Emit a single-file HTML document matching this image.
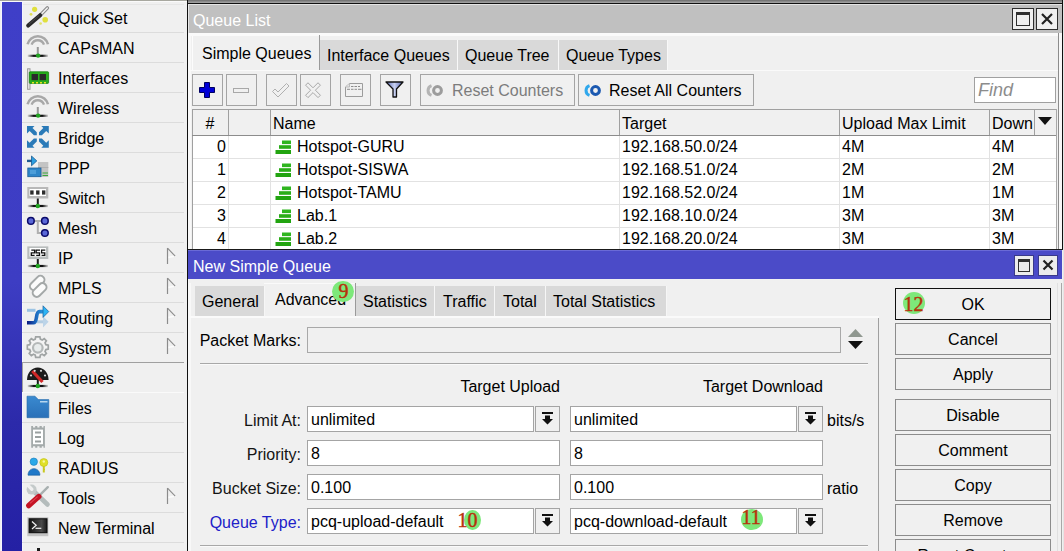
<!DOCTYPE html>
<html><head><meta charset="utf-8"><style>
html,body{margin:0;padding:0;width:1064px;height:551px;overflow:hidden;background:#f0f0f0}
body>div,body>svg{position:absolute}
.t{font-family:'Liberation Sans',sans-serif;font-size:16px;line-height:18px;height:18px;white-space:nowrap}
</style></head><body>
<div style="left:0px;top:0px;width:1064px;height:551px;background:#f0f0f0"></div>
<div style="left:0px;top:0px;width:187px;height:1px;background:#a8a8a0"></div>
<div style="left:0px;top:1px;width:187px;height:1px;background:#fafafa"></div>
<div style="left:22px;top:4px;width:162px;height:1px;background:#e6e6e6"></div>
<svg style="left:0;top:0" width="0" height="0"><defs><linearGradient id="gnd" gradientUnits="userSpaceOnUse" x1="5" y1="0" x2="27" y2="0"><stop offset="0" stop-color="#111" stop-opacity="0"/><stop offset="0.3" stop-color="#111"/><stop offset="0.7" stop-color="#111"/><stop offset="1" stop-color="#111" stop-opacity="0"/></linearGradient></defs></svg>
<div style="left:2px;top:2px;width:20px;height:549px;background:linear-gradient(#3f3fc8 0px,#3d3dc3 280px,#2c2aaa 420px,#2420a4 549px)"></div>
<div style="left:1px;top:2px;width:1px;height:549px;background:#f4f4ff"></div>
<div style="left:22px;top:2px;width:1px;height:549px;background:#f4f4ff"></div>
<div style="left:22px;top:32px;width:162px;height:1px;background:#dcdcdc"></div>
<div class="t" style="left:58px;top:10px;color:#000">Quick Set</div>
<svg style="left:22px;top:2px" width="38" height="30">
<circle cx="12.6" cy="7.3" r="2.6" fill="#dede2a" opacity="0.9"/>
<circle cx="9" cy="12.3" r="1.4" fill="#dada30" opacity="0.8"/>
<circle cx="23.2" cy="17.8" r="2.8" fill="#dede2a" opacity="0.9"/>
<circle cx="18.6" cy="21.5" r="1.3" fill="#dada30" opacity="0.7"/>
<path d="M18.2 13.2 L25.3 6" stroke="#8a8a8a" stroke-width="3.6" stroke-linecap="round"/>
<path d="M18.2 13.2 L25.3 6" stroke="#f4f4f4" stroke-width="1.4" stroke-linecap="round"/>
<path d="M6.2 23.6 L18.2 13.2" stroke="#2a2a2a" stroke-width="4" stroke-linecap="round"/>
<path d="M7 22.2 L17 13.6" stroke="#4a4a4a" stroke-width="1" />
</svg>
<div style="left:22px;top:62px;width:162px;height:1px;background:#dcdcdc"></div>
<div class="t" style="left:58px;top:40px;color:#000">CAPsMAN</div>
<svg style="left:22px;top:32px" width="38" height="30">
<path d="M5.6 12.2 A10.5 10.5 0 0 1 26 12.2" fill="none" stroke="#a8a8a8" stroke-width="2.6"/>
<path d="M9.6 12.6 A6.6 6.6 0 0 1 22 12.6" fill="none" stroke="#a8a8a8" stroke-width="2.4"/>
<path d="M15.8 15 V23" stroke="#989898" stroke-width="2"/>
<path d="M5.5 23.8 H26" stroke="url(#gnd)" stroke-width="2.2"/><circle cx="16.1" cy="23.6" r="2.2" fill="#22a422"/></svg>
<div style="left:22px;top:92px;width:162px;height:1px;background:#dcdcdc"></div>
<div class="t" style="left:58px;top:70px;color:#000">Interfaces</div>
<svg style="left:22px;top:62px" width="38" height="30">
<rect x="5.6" y="6.8" width="2.4" height="20.5" fill="#e8e8e8" stroke="#9a9a9a" stroke-width="1"/>
<rect x="7.3" y="9.8" width="19.3" height="11.6" rx="0.8" fill="#26ac1c" stroke="#168010" stroke-width="0.8"/>
<rect x="9.6" y="12" width="6.4" height="6.2" fill="#2a2a2a"/>
<rect x="17.6" y="12" width="6.4" height="6.2" fill="#2a2a2a"/>
<path d="M10 20.8 h2 M14 20.8 h2 M18 20.8 h2 M22 20.8 h2" stroke="#e6e020" stroke-width="1.4"/>
</svg>
<div style="left:22px;top:122px;width:162px;height:1px;background:#dcdcdc"></div>
<div class="t" style="left:58px;top:100px;color:#000">Wireless</div>
<svg style="left:22px;top:92px" width="38" height="30">
<path d="M5.6 12.2 A10.5 10.5 0 0 1 26 12.2" fill="none" stroke="#a8a8a8" stroke-width="2.6"/>
<path d="M9.6 12.6 A6.6 6.6 0 0 1 22 12.6" fill="none" stroke="#a8a8a8" stroke-width="2.4"/>
<path d="M15.8 15 V23" stroke="#989898" stroke-width="2"/>
<path d="M5.5 23.8 H26" stroke="url(#gnd)" stroke-width="2.2"/><circle cx="16.1" cy="23.6" r="2.2" fill="#22a422"/></svg>
<div style="left:22px;top:152px;width:162px;height:1px;background:#dcdcdc"></div>
<div class="t" style="left:58px;top:130px;color:#000">Bridge</div>
<svg style="left:22px;top:122px" width="38" height="30">
<g fill="#2a7ab8">
<path d="M5 4 H12.5 L10.5 6 L14.8 10.3 V13.2 H11.9 L7.6 8.9 L5 11.5 Z"/>
<path d="M26.8 4 H19.3 L21.3 6 L17 10.3 V13.2 H19.9 L24.2 8.9 L26.8 11.5 Z"/>
<path d="M5 25.7 H12.5 L10.5 23.7 L14.8 19.4 V16.5 H11.9 L7.6 20.8 L5 18.2 Z"/>
<path d="M26.8 25.7 H19.3 L21.3 23.7 L17 19.4 V16.5 H19.9 L24.2 20.8 L26.8 18.2 Z"/>
</g>
</svg>
<div style="left:22px;top:182px;width:162px;height:1px;background:#dcdcdc"></div>
<div class="t" style="left:58px;top:160px;color:#000">PPP</div>
<svg style="left:22px;top:152px" width="38" height="30">
<rect x="16" y="10" width="10.3" height="15" fill="#c4c4c4"/>
<rect x="16" y="15" width="10.3" height="1" fill="#b0b0b0"/>
<path d="M20.5 21 H26 M20.5 23.5 H26" stroke="#3aa83a" stroke-width="1.2"/>
<rect x="5.8" y="16" width="13.2" height="8.7" fill="#2f86c8" stroke="#1a5e9a" stroke-width="0.8"/>
<rect x="8" y="18" width="6" height="4" fill="#5aa8e0" opacity="0.7"/>
<path d="M5 8.9 H10" stroke="#1e5a90" stroke-width="2.4"/>
<path d="M9.5 4 L14.8 8.9 L9.5 13.8 Z" fill="#2c9ee0" stroke="#1a5a90" stroke-width="0.8"/>
</svg>
<div style="left:22px;top:212px;width:162px;height:1px;background:#dcdcdc"></div>
<div class="t" style="left:58px;top:190px;color:#000">Switch</div>
<svg style="left:22px;top:182px" width="38" height="30">
<rect x="5.3" y="5" width="21" height="11.5" fill="#b8b8b8"/>
<rect x="7.5" y="7" width="16.5" height="7" fill="#ffffff"/>
<rect x="8.2" y="8.4" width="3.4" height="4.2" fill="#2c2c2c"/>
<rect x="14.1" y="8.4" width="3.4" height="4.2" fill="#2c2c2c"/>
<rect x="20" y="8.4" width="3.4" height="4.2" fill="#2c2c2c"/>
<path d="M15.8 16.5 V23" stroke="#1a1a1a" stroke-width="2"/>
<path d="M5.5 24 H26" stroke="url(#gnd)" stroke-width="2.2"/><circle cx="15.8" cy="24" r="2.2" fill="#22a422"/></svg>
<div style="left:22px;top:242px;width:162px;height:1px;background:#dcdcdc"></div>
<div class="t" style="left:58px;top:220px;color:#000">Mesh</div>
<svg style="left:22px;top:212px" width="38" height="30">
<path d="M12.5 8.9 H19 M15.8 8.9 V21 H19" fill="none" stroke="#b0b0b0" stroke-width="2"/>
<circle cx="8.9" cy="8.9" r="3.3" fill="#5a68d8" stroke="#0a0a6a" stroke-width="1.5"/>
<circle cx="22.9" cy="8.9" r="3.3" fill="#5a68d8" stroke="#0a0a6a" stroke-width="1.5"/>
<circle cx="22.9" cy="21" r="3.3" fill="#5a68d8" stroke="#0a0a6a" stroke-width="1.5"/>
</svg>
<div style="left:22px;top:272px;width:162px;height:1px;background:#dcdcdc"></div>
<div class="t" style="left:58px;top:250px;color:#000">IP</div>
<svg style="left:22px;top:242px" width="38" height="30">
<rect x="5.3" y="4.4" width="21" height="12.6" fill="#b8bcbc"/>
<rect x="7.5" y="6" width="16.5" height="8.5" fill="#ffffff"/>
<path d="M9.3 8.2 H12.6 V10.8 H9.3 V13.4 H12.6  M18 8.2 H14.2 V10.8 H17.5 V13.4 H14.2 M23.3 8.2 H19.6 V10.8 H22.8 V13.4 H19.6" fill="none" stroke="#111" stroke-width="1.3"/>
<path d="M15.8 17 V23" stroke="#1a1a1a" stroke-width="2"/>
<path d="M5.5 24 H26" stroke="url(#gnd)" stroke-width="2.2"/><circle cx="15.8" cy="24" r="2.2" fill="#22a422"/></svg>
<svg style="left:165px;top:247px" width="14" height="18"><path d="M3 10.5 L10.5 9" stroke="#fcfcfc" stroke-width="1.5" fill="none"/><path d="M2.5 1 V17" stroke="#8c8c8c" stroke-width="1.2" fill="none"/><path d="M2.5 1.2 L10.2 9.2" stroke="#8c8c8c" stroke-width="1.1" fill="none"/></svg>
<div style="left:22px;top:302px;width:162px;height:1px;background:#dcdcdc"></div>
<div class="t" style="left:58px;top:280px;color:#000">MPLS</div>
<svg style="left:22px;top:272px" width="38" height="30">
<g fill="#fbfbfb" stroke="#a4a8a8" stroke-width="2">
<rect x="-4" y="-8.5" width="8" height="17" rx="3.8" transform="translate(15.2,11) rotate(45)"/>
<rect x="-4" y="-8" width="8" height="16" rx="3.8" transform="translate(17.6,18) rotate(45)"/>
</g>
</svg>
<svg style="left:165px;top:277px" width="14" height="18"><path d="M3 10.5 L10.5 9" stroke="#fcfcfc" stroke-width="1.5" fill="none"/><path d="M2.5 1 V17" stroke="#8c8c8c" stroke-width="1.2" fill="none"/><path d="M2.5 1.2 L10.2 9.2" stroke="#8c8c8c" stroke-width="1.1" fill="none"/></svg>
<div style="left:22px;top:332px;width:162px;height:1px;background:#dcdcdc"></div>
<div class="t" style="left:58px;top:310px;color:#000">Routing</div>
<svg style="left:22px;top:302px" width="38" height="30">
<path d="M5 8.3 H13.5" stroke="#9cc4e4" stroke-width="3"/>
<path d="M15 19.8 H21.2" stroke="#b4cde2" stroke-width="3"/>
<path d="M21 14.2 L26.6 19.8 L21 25.4 Z" fill="#bcd4e8"/>
<defs><linearGradient id="rg" gradientUnits="userSpaceOnUse" x1="5" y1="0" x2="26" y2="0"><stop offset="0" stop-color="#0a1880"/><stop offset="0.45" stop-color="#1e6cc0"/><stop offset="1" stop-color="#30b8f4"/></linearGradient></defs>
<path d="M5 20.8 H11.5 C15.8 20.8 13.2 9.6 17.4 9.6 H22" fill="none" stroke="url(#rg)" stroke-width="3.6"/>
<path d="M21 3.8 L26.8 9.6 L21 15.4 Z" fill="#2cb4f4" stroke="#1a5c9c" stroke-width="0.7"/>
</svg>
<svg style="left:165px;top:307px" width="14" height="18"><path d="M3 10.5 L10.5 9" stroke="#fcfcfc" stroke-width="1.5" fill="none"/><path d="M2.5 1 V17" stroke="#8c8c8c" stroke-width="1.2" fill="none"/><path d="M2.5 1.2 L10.2 9.2" stroke="#8c8c8c" stroke-width="1.1" fill="none"/></svg>
<div style="left:22px;top:362px;width:162px;height:1px;background:#dcdcdc"></div>
<div class="t" style="left:58px;top:340px;color:#000">System</div>
<svg style="left:22px;top:332px" width="38" height="30">
<g transform="translate(15.8,15)">
<path d="M-2.5 -10.5 H2.5 L3 -7.8 L5.2 -6.7 L7.6 -8.3 L10.1 -5.8 L8.5 -3.4 L9.5 -1.2 L12.3 -0.6 V3.9 L9.5 4.5 L8.5 6.7 L10.1 9.1 L7.6 11.6 L5.2 10 L3 11 L2.5 13.8 H-2.5 L-3 11 L-5.2 10 L-7.6 11.6 L-10.1 9.1 L-8.5 6.7 L-9.5 4.5 L-12.3 3.9 V-0.6 L-9.5 -1.2 L-8.5 -3.4 L-10.1 -5.8 L-7.6 -8.3 L-5.2 -6.7 L-3 -7.8 Z" transform="scale(0.85) translate(0,-1.5)" fill="#f4f4f4" stroke="#a0a4a4" stroke-width="2"/>
<circle cx="0" cy="0.8" r="4.8" fill="#e8ecec" stroke="#b4b8b8" stroke-width="2.2"/>
</g>
</svg>
<svg style="left:165px;top:337px" width="14" height="18"><path d="M3 10.5 L10.5 9" stroke="#fcfcfc" stroke-width="1.5" fill="none"/><path d="M2.5 1 V17" stroke="#8c8c8c" stroke-width="1.2" fill="none"/><path d="M2.5 1.2 L10.2 9.2" stroke="#8c8c8c" stroke-width="1.1" fill="none"/></svg>
<div style="left:22px;top:392px;width:162px;height:1px;background:#dcdcdc"></div>
<div class="t" style="left:58px;top:370px;color:#000">Queues</div>
<svg style="left:22px;top:362px" width="38" height="30">
<path d="M5 18 A10.8 12.6 0 0 1 26.6 18 Z" fill="#1c1c1c"/>
<path d="M10.3 9 L20.5 20" stroke="#d02828" stroke-width="3.2"/>
<circle cx="12.7" cy="8.8" r="1.1" fill="#d8d8d8"/><circle cx="19" cy="8.8" r="1.1" fill="#d8d8d8"/>
<circle cx="9" cy="13.5" r="1.1" fill="#d8d8d8"/><circle cx="23" cy="13.5" r="1.1" fill="#d8d8d8"/>
<path d="M15.8 18 V23" stroke="#1a1a1a" stroke-width="2"/>
<path d="M5.5 24 H26" stroke="url(#gnd)" stroke-width="2.2"/><circle cx="15.8" cy="24" r="2.2" fill="#22a422"/></svg>
<div style="left:22px;top:422px;width:162px;height:1px;background:#dcdcdc"></div>
<div class="t" style="left:58px;top:400px;color:#000">Files</div>
<svg style="left:22px;top:392px" width="38" height="30">
<defs><linearGradient id="fl" x1="0" y1="0" x2="0" y2="1"><stop offset="0" stop-color="#3a8ad0"/><stop offset="1" stop-color="#2a70b8"/></linearGradient></defs>
<path d="M5 4.2 H13 L16.3 7.6 H26.8 V25.7 H5 Z" fill="url(#fl)" stroke="#2468a8" stroke-width="0.6"/>
<path d="M18 9.8 H25.5" stroke="#d8ecf8" stroke-width="1.2"/>
</svg>
<div style="left:22px;top:452px;width:162px;height:1px;background:#dcdcdc"></div>
<div class="t" style="left:58px;top:430px;color:#000">Log</div>
<svg style="left:22px;top:422px" width="38" height="30">
<path d="M9.2 4 H11 V5.5 H13.2 V4 H15.3 V5.5 H17.5 V4 H19.8 V5.5 H21.5 V4 H22.9 V25.7 H21.5 V24.2 H19.8 V25.7 H17.5 V24.2 H15.3 V25.7 H13.2 V24.2 H11 V25.7 H9.2 Z" fill="#a4aaaa"/>
<rect x="11" y="7.6" width="10" height="14.6" fill="#ffffff"/>
<path d="M13 10.5 H19 M13 15 H19 M13 19.5 H19" stroke="#9aa0a0" stroke-width="2"/>
</svg>
<div style="left:22px;top:482px;width:162px;height:1px;background:#dcdcdc"></div>
<div class="t" style="left:58px;top:460px;color:#000">RADIUS</div>
<svg style="left:22px;top:452px" width="38" height="30">
<path d="M6 23.2 C6 14.5 17.9 14.5 17.9 23.2 Z" fill="#1f78c8" stroke="#145a9a" stroke-width="0.6"/>
<circle cx="11.8" cy="9.7" r="3.7" fill="#2aa8e8" stroke="#1a78b8" stroke-width="0.6"/>
<path d="M21.8 13 V20.5" stroke="#c8c820" stroke-width="2"/>
<path d="M21.8 17.5 H23" stroke="#c8c820" stroke-width="1"/>
<circle cx="21.8" cy="10.5" r="4" fill="#e0e028" stroke="#c0c010" stroke-width="0.6"/>
<circle cx="21.8" cy="9.5" r="1.2" fill="#f8f8a0"/>
</svg>
<div style="left:22px;top:512px;width:162px;height:1px;background:#dcdcdc"></div>
<div class="t" style="left:58px;top:490px;color:#000">Tools</div>
<svg style="left:22px;top:482px" width="38" height="30">
<path d="M12 9.5 L25.5 22.5" stroke="#b4bcbc" stroke-width="4.6" stroke-linecap="round"/>
<circle cx="9.6" cy="7.6" r="5" fill="#c4caca"/>
<path d="M9.8 7.2 L6 3.4" stroke="#f0f0f0" stroke-width="3.4" stroke-linecap="round"/>
<path d="M16.3 14.7 L25.8 5.2" stroke="#a8b0b0" stroke-width="2.4" stroke-linecap="round"/>
<path d="M6.8 23.6 L16.8 14.6" stroke="#c41424" stroke-width="5.4" stroke-linecap="round"/>
<path d="M8 21.4 L15.6 14.6" stroke="#e04050" stroke-width="1.2"/>
</svg>
<svg style="left:165px;top:487px" width="14" height="18"><path d="M3 10.5 L10.5 9" stroke="#fcfcfc" stroke-width="1.5" fill="none"/><path d="M2.5 1 V17" stroke="#8c8c8c" stroke-width="1.2" fill="none"/><path d="M2.5 1.2 L10.2 9.2" stroke="#8c8c8c" stroke-width="1.1" fill="none"/></svg>
<div style="left:22px;top:542px;width:162px;height:1px;background:#dcdcdc"></div>
<div class="t" style="left:58px;top:520px;color:#000">New Terminal</div>
<svg style="left:22px;top:512px" width="38" height="30">
<rect x="5.3" y="5.2" width="21" height="19" fill="#c4c4c4"/>
<defs><linearGradient id="tg" x1="0" x2="1"><stop offset="0" stop-color="#141414"/><stop offset="0.7" stop-color="#4a4a4a"/><stop offset="1" stop-color="#1a1a1a"/></linearGradient></defs>
<rect x="7.1" y="6.8" width="17.9" height="13.9" fill="url(#tg)" stroke="#0a0a0a" stroke-width="1"/>
<path d="M10 9.5 L14.2 13.3 L10 17" fill="none" stroke="#f4f4f4" stroke-width="1.2"/>
<path d="M13.5 16.3 H19.3" stroke="#f4f4f4" stroke-width="1.2"/>
</svg>
<div style="left:37px;top:548px;width:3px;height:3px;background:#1a1a1a"></div>
<div style="left:22px;top:362px;width:162px;height:1px;background:#a0a0a0"></div>
<div style="left:22px;top:362px;width:1px;height:30px;background:#a0a0a0"></div>
<div style="left:22px;top:392px;width:162px;height:1px;background:#fafafa"></div>
<div style="left:187px;top:0px;width:874px;height:249px;background:#f0f0f0"></div>
<div style="left:187px;top:0px;width:876px;height:3px;background:linear-gradient(#6c6c6c,#a8a8a8)"></div>
<div style="left:187px;top:3px;width:876px;height:1px;background:#111"></div>
<div style="left:187px;top:0px;width:1px;height:249px;background:#111"></div>
<div style="left:188px;top:4px;width:3px;height:245px;background:#f8f8f8"></div>
<div style="left:1058px;top:32px;width:1px;height:217px;background:#8c8c8c"></div>
<div style="left:1059px;top:32px;width:3px;height:217px;background:#f8f8f8"></div>
<div style="left:1062px;top:0px;width:1px;height:249px;background:#111"></div>
<div style="left:1063px;top:0px;width:1px;height:551px;background:#e4e4e4"></div>
<div style="left:188px;top:4px;width:874px;height:29px;background:#c0c0c0;border-top:1px solid #e4e4e4;border-left:1px solid #e8e8e8;box-sizing:border-box"></div>
<div class="t" style="left:193px;top:12px;color:#fff">Queue List</div>
<div style="left:1012px;top:8px;width:22px;height:22px;background:#f0f0f0;border:1px solid #2e2e2e;box-sizing:border-box"></div>
<div style="left:1036px;top:8px;width:22px;height:22px;background:#f0f0f0;border:1px solid #2e2e2e;box-sizing:border-box"></div>
<div style="left:1016px;top:12px;width:14px;height:14px;border:1px solid #303030;border-top:3px solid #303030;box-sizing:border-box"></div>
<svg style="left:1040px;top:12px" width="14" height="14"><path d="M2 2 L12 12 M12 2 L2 12" stroke="#222" stroke-width="2.2"/></svg>
<div style="left:189px;top:33px;width:869px;height:3px;background:#fafafa"></div>
<div style="left:192px;top:36px;width:128px;height:34px;background:#f0f0f0;border-left:1px solid #fcfcfc"></div>
<div style="left:319px;top:35px;width:1px;height:35px;background:#9a9a9a"></div>
<div style="left:320px;top:40px;width:137px;height:30px;background:#d9d9d9"></div>
<div style="left:457px;top:40px;width:1px;height:30px;background:#f8f8f8"></div>
<div class="t" style="left:327px;top:47px;color:#000">Interface Queues</div>
<div style="left:458px;top:40px;width:100px;height:30px;background:#d9d9d9"></div>
<div style="left:558px;top:40px;width:1px;height:30px;background:#f8f8f8"></div>
<div class="t" style="left:465px;top:47px;color:#000">Queue Tree</div>
<div style="left:559px;top:40px;width:108px;height:30px;background:#d9d9d9"></div>
<div style="left:667px;top:40px;width:1px;height:30px;background:#f8f8f8"></div>
<div class="t" style="left:566px;top:47px;color:#000">Queue Types</div>
<div class="t" style="left:202px;top:45px;color:#000">Simple Queues</div>
<div style="left:189px;top:70px;width:869px;height:1px;background:#fafafa"></div>
<div style="left:192px;top:74px;width:31px;height:32px;background:#f0f0f0;border:1px solid #a4a4a4;box-sizing:border-box"></div>
<div style="left:226px;top:74px;width:31px;height:32px;background:#f0f0f0;border:1px solid #a4a4a4;box-sizing:border-box"></div>
<div style="left:266px;top:74px;width:31px;height:32px;background:#f0f0f0;border:1px solid #a4a4a4;box-sizing:border-box"></div>
<div style="left:300px;top:74px;width:31px;height:32px;background:#f0f0f0;border:1px solid #a4a4a4;box-sizing:border-box"></div>
<div style="left:340px;top:74px;width:31px;height:32px;background:#f0f0f0;border:1px solid #a4a4a4;box-sizing:border-box"></div>
<div style="left:380px;top:74px;width:31px;height:32px;background:#f0f0f0;border:1px solid #a4a4a4;box-sizing:border-box"></div>
<div style="left:420px;top:74px;width:155px;height:32px;background:#f0f0f0;border:1px solid #a4a4a4;box-sizing:border-box"></div>
<div style="left:578px;top:74px;width:176px;height:32px;background:#f0f0f0;border:1px solid #a4a4a4;box-sizing:border-box"></div>
<svg style="left:197px;top:80px" width="20" height="20"><path d="M7.5 2.5h5v5h5v5h-5v5h-5v-5h-5v-5h5z" fill="#0000d8" stroke="#000060" stroke-width="1"/></svg>
<svg style="left:230px;top:80px" width="24" height="20"><rect x="3.5" y="8.5" width="15" height="4" fill="none" stroke="#a8a8a8" stroke-width="1"/></svg>
<svg style="left:270px;top:79px" width="24" height="22"><path d="M2.5 12.5 L8 18 L19 7 L16.5 4.5 L8 13 L5 10 Z" fill="none" stroke="#b0b0b0" stroke-width="1"/></svg>
<svg style="left:300px;top:79px" width="26" height="24"><path d="M18.02 3.78 L20.42 6.18 L15.40 11.20 L20.42 16.22 L18.02 18.62 L13.00 13.60 L7.98 18.62 L5.58 16.22 L10.60 11.20 L5.58 6.18 L7.98 3.78 L13.00 8.80 Z" fill="none" stroke="#a8a8a8" stroke-width="1"/></svg>
<svg style="left:340px;top:79px" width="26" height="22"><path d="M5.5 8 L9.5 4.5 H22.5 V17.5 H5.5 Z" fill="none" stroke="#9c9c9c" stroke-width="1"/><path d="M5.5 8 H9.5 V4.5" fill="#e4e4e4" stroke="#b0b0b0" stroke-width="0.8"/><path d="M11 7.5h2.5 M14.5 7.5h2.5 M18 7.5h2 M7 10.3h3 M11 10.3h2.5 M14.5 10.3h2.5 M18 10.3h3.5" stroke="#8c8c8c" stroke-width="1"/></svg>
<svg style="left:384px;top:79px" width="24" height="22"><defs><linearGradient id="fg" x1="0" x2="1"><stop offset="0" stop-color="#5a6ab8"/><stop offset="0.5" stop-color="#c8d0f0"/><stop offset="1" stop-color="#5060b0"/></linearGradient></defs><path d="M2 3 H19 L12.5 10 V18 H9 V10 Z" fill="url(#fg)" stroke="#111" stroke-width="1.3" stroke-linejoin="round"/></svg>
<svg style="left:424px;top:83px" width="22" height="16"><path d="M7.5 2.6 A5.2 5.2 0 0 0 7.5 12.4" fill="none" stroke="#b4b4b4" stroke-width="3"/><circle cx="13.5" cy="7.5" r="3.9" fill="none" stroke="#9c9c9c" stroke-width="3"/></svg>
<div class="t" style="left:452px;top:82px;color:#7c7c7c">Reset Counters</div>
<svg style="left:582px;top:83px" width="22" height="16"><path d="M7.5 2.6 A5.2 5.2 0 0 0 7.5 12.4" fill="none" stroke="#30a8ec" stroke-width="3"/><circle cx="13.5" cy="7.5" r="3.9" fill="none" stroke="#1a58b0" stroke-width="3"/></svg>
<div class="t" style="left:609px;top:82px;color:#000">Reset All Counters</div>
<div style="left:974px;top:77px;width:82px;height:26px;background:#fff;border:1px solid #a0a0a0;box-sizing:border-box"></div>
<div class="t" style="left:978px;top:80px;font-size:18px;line-height:20px;height:20px;color:#8c8c8c;font-style:italic">Find</div>
<div style="left:192px;top:109px;width:864px;height:140px;background:#fff"></div>
<div style="left:192px;top:109px;width:864px;height:26px;background:#f0f0f0"></div>
<div style="left:192px;top:109px;width:864px;height:1px;background:#a0a0a0"></div>
<div style="left:192px;top:109px;width:1px;height:140px;background:#a0a0a0"></div>
<div style="left:1056px;top:109px;width:1px;height:140px;background:#a8a8a8"></div>
<div style="left:192px;top:135px;width:864px;height:1px;background:#8c8c8c"></div>
<div style="left:228px;top:110px;width:1px;height:25px;background:#a0a0a0"></div>
<div style="left:228px;top:136px;width:1px;height:113px;background:#e2e2e2"></div>
<div style="left:270px;top:110px;width:1px;height:25px;background:#a0a0a0"></div>
<div style="left:270px;top:136px;width:1px;height:113px;background:#e2e2e2"></div>
<div style="left:619px;top:110px;width:1px;height:25px;background:#a0a0a0"></div>
<div style="left:619px;top:136px;width:1px;height:113px;background:#e2e2e2"></div>
<div style="left:839px;top:110px;width:1px;height:25px;background:#a0a0a0"></div>
<div style="left:839px;top:136px;width:1px;height:113px;background:#e2e2e2"></div>
<div style="left:989px;top:110px;width:1px;height:25px;background:#a0a0a0"></div>
<div style="left:989px;top:136px;width:1px;height:113px;background:#e2e2e2"></div>
<div style="left:1034px;top:110px;width:1px;height:25px;background:#a0a0a0"></div>
<div style="left:193px;top:158px;width:863px;height:1px;background:#e2e2e2"></div>
<div style="left:193px;top:181px;width:863px;height:1px;background:#e2e2e2"></div>
<div style="left:193px;top:204px;width:863px;height:1px;background:#e2e2e2"></div>
<div style="left:193px;top:227px;width:863px;height:1px;background:#e2e2e2"></div>
<div style="left:193px;top:250px;width:863px;height:1px;background:#e2e2e2"></div>
<div class="t" style="left:192px;width:36px;text-align:center;top:115px;color:#000">#</div>
<div class="t" style="left:273px;top:115px;color:#000">Name</div>
<div class="t" style="left:622px;top:115px;color:#000">Target</div>
<div class="t" style="left:842px;top:115px;color:#000">Upload Max Limit</div>
<div class="t" style="left:992px;top:115px;color:#000">Down</div>
<svg style="left:1037px;top:116px" width="16" height="12"><path d="M1 1 H15 L8 9 Z" fill="#111"/></svg>
<div class="t" style="left:-174px;width:400px;text-align:right;top:138px;color:#000">0</div>
<svg style="left:275px;top:140px" width="17" height="15"><rect x="7" y="0.5" width="9" height="3.6" fill="#2fb51f"/><rect x="4" y="5.2" width="12" height="3.6" fill="#2aad18"/><rect x="0.5" y="10" width="15.5" height="4" fill="#22a410"/></svg>
<div class="t" style="left:297px;top:138px;color:#000">Hotspot-GURU</div>
<div class="t" style="left:622px;top:138px;color:#000">192.168.50.0/24</div>
<div class="t" style="left:842px;top:138px;color:#000">4M</div>
<div class="t" style="left:992px;top:138px;color:#000">4M</div>
<div class="t" style="left:-174px;width:400px;text-align:right;top:161px;color:#000">1</div>
<svg style="left:275px;top:163px" width="17" height="15"><rect x="7" y="0.5" width="9" height="3.6" fill="#2fb51f"/><rect x="4" y="5.2" width="12" height="3.6" fill="#2aad18"/><rect x="0.5" y="10" width="15.5" height="4" fill="#22a410"/></svg>
<div class="t" style="left:297px;top:161px;color:#000">Hotspot-SISWA</div>
<div class="t" style="left:622px;top:161px;color:#000">192.168.51.0/24</div>
<div class="t" style="left:842px;top:161px;color:#000">2M</div>
<div class="t" style="left:992px;top:161px;color:#000">2M</div>
<div class="t" style="left:-174px;width:400px;text-align:right;top:184px;color:#000">2</div>
<svg style="left:275px;top:186px" width="17" height="15"><rect x="7" y="0.5" width="9" height="3.6" fill="#2fb51f"/><rect x="4" y="5.2" width="12" height="3.6" fill="#2aad18"/><rect x="0.5" y="10" width="15.5" height="4" fill="#22a410"/></svg>
<div class="t" style="left:297px;top:184px;color:#000">Hotspot-TAMU</div>
<div class="t" style="left:622px;top:184px;color:#000">192.168.52.0/24</div>
<div class="t" style="left:842px;top:184px;color:#000">1M</div>
<div class="t" style="left:992px;top:184px;color:#000">1M</div>
<div class="t" style="left:-174px;width:400px;text-align:right;top:207px;color:#000">3</div>
<svg style="left:275px;top:209px" width="17" height="15"><rect x="7" y="0.5" width="9" height="3.6" fill="#2fb51f"/><rect x="4" y="5.2" width="12" height="3.6" fill="#2aad18"/><rect x="0.5" y="10" width="15.5" height="4" fill="#22a410"/></svg>
<div class="t" style="left:297px;top:207px;color:#000">Lab.1</div>
<div class="t" style="left:622px;top:207px;color:#000">192.168.10.0/24</div>
<div class="t" style="left:842px;top:207px;color:#000">3M</div>
<div class="t" style="left:992px;top:207px;color:#000">3M</div>
<div class="t" style="left:-174px;width:400px;text-align:right;top:230px;color:#000">4</div>
<svg style="left:275px;top:232px" width="17" height="15"><rect x="7" y="0.5" width="9" height="3.6" fill="#2fb51f"/><rect x="4" y="5.2" width="12" height="3.6" fill="#2aad18"/><rect x="0.5" y="10" width="15.5" height="4" fill="#22a410"/></svg>
<div class="t" style="left:297px;top:230px;color:#000">Lab.2</div>
<div class="t" style="left:622px;top:230px;color:#000">192.168.20.0/24</div>
<div class="t" style="left:842px;top:230px;color:#000">3M</div>
<div class="t" style="left:992px;top:230px;color:#000">3M</div>
<div style="left:187px;top:249px;width:876px;height:302px;background:#f0f0f0"></div>
<div style="left:1057px;top:279px;width:1px;height:272px;background:#e0e0e0"></div>
<div style="left:1061px;top:279px;width:1px;height:272px;background:#a8a8a8"></div>
<div style="left:187px;top:249px;width:876px;height:1px;background:#1a1a1a"></div>
<div style="left:187px;top:249px;width:1px;height:302px;background:#111"></div>
<div style="left:188px;top:279px;width:3px;height:272px;background:#f8f8f8"></div>
<div style="left:188px;top:250px;width:874px;height:29px;background:#4b4bc8"></div>
<div style="left:188px;top:250px;width:874px;height:1px;background:#6a6ad6"></div>
<div class="t" style="left:193px;top:258px;color:#ffffff">New Simple Queue</div>
<div style="left:1014px;top:255px;width:20px;height:21px;background:#ececec;border:1px solid #3a3a8a;box-sizing:border-box"></div>
<div style="left:1038px;top:255px;width:20px;height:21px;background:#ececec;border:1px solid #3a3a8a;box-sizing:border-box"></div>
<div style="left:1018px;top:259px;width:12px;height:13px;border:1px solid #303030;border-top:3px solid #303030;box-sizing:border-box"></div>
<svg style="left:1041px;top:258px" width="14" height="14"><path d="M2.5 2.5 L11.5 11.5 M11.5 2.5 L2.5 11.5" stroke="#222" stroke-width="2.2"/></svg>
<div style="left:189px;top:279px;width:873px;height:4px;background:#f0f0f0"></div>
<div style="left:264px;top:283px;width:92px;height:33px;background:#f0f0f0;border-top:1px solid #fafafa"></div>
<div style="left:355px;top:283px;width:1px;height:33px;background:#9a9a9a"></div>
<div style="left:195px;top:286px;width:69px;height:30px;background:#d9d9d9"></div>
<div style="left:264px;top:286px;width:1px;height:30px;background:#f6f6f6"></div>
<div class="t" style="left:202px;top:293px;color:#000">General</div>
<div style="left:356px;top:286px;width:78px;height:30px;background:#d9d9d9"></div>
<div style="left:434px;top:286px;width:1px;height:30px;background:#f6f6f6"></div>
<div class="t" style="left:363px;top:293px;color:#000">Statistics</div>
<div style="left:435px;top:286px;width:59px;height:30px;background:#d9d9d9"></div>
<div style="left:494px;top:286px;width:1px;height:30px;background:#f6f6f6"></div>
<div class="t" style="left:443px;top:293px;color:#000">Traffic</div>
<div style="left:495px;top:286px;width:50px;height:30px;background:#d9d9d9"></div>
<div style="left:545px;top:286px;width:1px;height:30px;background:#f6f6f6"></div>
<div class="t" style="left:503px;top:293px;color:#000">Total</div>
<div style="left:546px;top:286px;width:120px;height:30px;background:#d9d9d9"></div>
<div style="left:666px;top:286px;width:1px;height:30px;background:#f6f6f6"></div>
<div class="t" style="left:553px;top:293px;color:#000">Total Statistics</div>
<div class="t" style="left:275px;top:291px;color:#000">Advanced</div>
<div style="left:189px;top:316px;width:690px;height:2px;background:#fafafa"></div>
<div style="left:878px;top:318px;width:1px;height:233px;background:#a0a0a0"></div>
<div class="t" style="left:-99px;width:400px;text-align:right;top:332px;color:#000">Packet Marks:</div>
<div style="left:307px;top:327px;width:534px;height:26px;background:#f0f0f0;border:1px solid #a8a8a8;box-sizing:border-box"></div>
<svg style="left:846px;top:327px" width="20" height="24"><path d="M2 10 L9.5 2 L17 10 Z" fill="#909890"/><path d="M2 14 L9.5 22 L17 14 Z" fill="#111"/></svg>
<div style="left:200px;top:363px;width:668px;height:1px;background:#a8a8a8"></div>
<div style="left:200px;top:364px;width:668px;height:1px;background:#fafafa"></div>
<div class="t" style="left:160px;width:400px;text-align:right;top:378px;color:#000">Target Upload</div>
<div class="t" style="left:423px;width:400px;text-align:right;top:378px;color:#000">Target Download</div>
<div class="t" style="left:-99px;width:400px;text-align:right;top:412px;color:#141414">Limit At:</div>
<div style="left:307px;top:406px;width:227px;height:26px;background:#fff;border:1px solid #a4a4a4;box-sizing:border-box"></div>
<div style="left:535px;top:406px;width:25px;height:26px;background:#f0f0f0;border:1px solid #a4a4a4;box-sizing:border-box"></div>
<svg style="left:541px;top:411px" width="14" height="16"><rect x="1" y="1" width="11" height="2" fill="#111"/><path d="M4 4.5 H9 V8 H12 L6.5 13.5 L1 8 H4 Z" fill="#111"/></svg>
<div style="left:570px;top:406px;width:227px;height:26px;background:#fff;border:1px solid #a4a4a4;box-sizing:border-box"></div>
<div style="left:798px;top:406px;width:25px;height:26px;background:#f0f0f0;border:1px solid #a4a4a4;box-sizing:border-box"></div>
<svg style="left:804px;top:411px" width="14" height="16"><rect x="1" y="1" width="11" height="2" fill="#111"/><path d="M4 4.5 H9 V8 H12 L6.5 13.5 L1 8 H4 Z" fill="#111"/></svg>
<div class="t" style="left:311px;top:411px;color:#000">unlimited</div>
<div class="t" style="left:574px;top:411px;color:#000">unlimited</div>
<div class="t" style="left:827px;top:412px;color:#000">bits/s</div>
<div class="t" style="left:-99px;width:400px;text-align:right;top:446px;color:#141414">Priority:</div>
<div style="left:307px;top:440px;width:253px;height:26px;background:#fff;border:1px solid #a4a4a4;box-sizing:border-box"></div>
<div style="left:570px;top:440px;width:253px;height:26px;background:#fff;border:1px solid #a4a4a4;box-sizing:border-box"></div>
<div class="t" style="left:311px;top:445px;color:#000">8</div>
<div class="t" style="left:574px;top:445px;color:#000">8</div>
<div class="t" style="left:-99px;width:400px;text-align:right;top:480px;color:#141414">Bucket Size:</div>
<div style="left:307px;top:474px;width:253px;height:26px;background:#fff;border:1px solid #a4a4a4;box-sizing:border-box"></div>
<div style="left:570px;top:474px;width:253px;height:26px;background:#fff;border:1px solid #a4a4a4;box-sizing:border-box"></div>
<div class="t" style="left:311px;top:479px;color:#000">0.100</div>
<div class="t" style="left:574px;top:479px;color:#000">0.100</div>
<div class="t" style="left:827px;top:480px;color:#000">ratio</div>
<div class="t" style="left:-99px;width:400px;text-align:right;top:514px;color:#2020c8">Queue Type:</div>
<div style="left:307px;top:508px;width:227px;height:26px;background:#fff;border:1px solid #a4a4a4;box-sizing:border-box"></div>
<div style="left:535px;top:508px;width:25px;height:26px;background:#f0f0f0;border:1px solid #a4a4a4;box-sizing:border-box"></div>
<svg style="left:541px;top:513px" width="14" height="16"><rect x="1" y="1" width="11" height="2" fill="#111"/><path d="M4 4.5 H9 V8 H12 L6.5 13.5 L1 8 H4 Z" fill="#111"/></svg>
<div style="left:570px;top:508px;width:227px;height:26px;background:#fff;border:1px solid #a4a4a4;box-sizing:border-box"></div>
<div style="left:798px;top:508px;width:25px;height:26px;background:#f0f0f0;border:1px solid #a4a4a4;box-sizing:border-box"></div>
<svg style="left:804px;top:513px" width="14" height="16"><rect x="1" y="1" width="11" height="2" fill="#111"/><path d="M4 4.5 H9 V8 H12 L6.5 13.5 L1 8 H4 Z" fill="#111"/></svg>
<div class="t" style="left:311px;top:513px;color:#000">pcq-upload-default</div>
<div class="t" style="left:574px;top:513px;color:#000">pcq-download-default</div>
<div style="left:200px;top:545px;width:668px;height:1px;background:#a8a8a8"></div>
<div style="left:200px;top:546px;width:668px;height:1px;background:#fafafa"></div>
<div style="left:895px;top:288px;width:156px;height:32px;background:#f0f0f0;border:1px solid #101010;box-sizing:border-box"></div>
<div class="t" style="left:895px;width:156px;text-align:center;top:296px;color:#000">OK</div>
<div style="left:895px;top:323px;width:156px;height:32px;background:#f0f0f0;border:1px solid #8c8c8c;box-sizing:border-box"></div>
<div class="t" style="left:895px;width:156px;text-align:center;top:331px;color:#000">Cancel</div>
<div style="left:895px;top:358px;width:156px;height:32px;background:#f0f0f0;border:1px solid #8c8c8c;box-sizing:border-box"></div>
<div class="t" style="left:895px;width:156px;text-align:center;top:366px;color:#000">Apply</div>
<div style="left:895px;top:399px;width:156px;height:32px;background:#f0f0f0;border:1px solid #8c8c8c;box-sizing:border-box"></div>
<div class="t" style="left:895px;width:156px;text-align:center;top:407px;color:#000">Disable</div>
<div style="left:895px;top:434px;width:156px;height:32px;background:#f0f0f0;border:1px solid #8c8c8c;box-sizing:border-box"></div>
<div class="t" style="left:895px;width:156px;text-align:center;top:442px;color:#000">Comment</div>
<div style="left:895px;top:469px;width:156px;height:32px;background:#f0f0f0;border:1px solid #8c8c8c;box-sizing:border-box"></div>
<div class="t" style="left:895px;width:156px;text-align:center;top:477px;color:#000">Copy</div>
<div style="left:895px;top:504px;width:156px;height:32px;background:#f0f0f0;border:1px solid #8c8c8c;box-sizing:border-box"></div>
<div class="t" style="left:895px;width:156px;text-align:center;top:512px;color:#000">Remove</div>
<div style="left:895px;top:539px;width:156px;height:32px;background:#f0f0f0;border:1px solid #8c8c8c;box-sizing:border-box"></div>
<div class="t" style="left:895px;width:156px;text-align:center;top:547px;color:#000">Reset Counters</div>
<div style="left:332.2px;top:280.7px;width:21.6px;height:21.6px;border-radius:50%;background:#7de87a;filter:blur(0.6px)"></div>
<div style="left:338.5px;top:281px;font-family:'Liberation Serif',serif;font-size:20px;line-height:20px;color:#b8300c;-webkit-text-stroke:0.45px #b8300c;white-space:nowrap">9</div>
<div style="left:902.5px;top:292px;width:22px;height:22px;border-radius:50%;background:#7de87a;filter:blur(0.6px)"></div>
<div style="left:903.5px;top:294px;font-family:'Liberation Serif',serif;font-size:20px;line-height:20px;color:#b8300c;-webkit-text-stroke:0.45px #b8300c;white-space:nowrap">12</div>
<div style="left:463.5px;top:509.7px;width:17.0px;height:20.6px;border-radius:50%;background:#7de87a;filter:blur(0.6px)"></div>
<div style="left:457.5px;top:510px;font-family:'Liberation Serif',serif;font-size:20px;line-height:20px;color:#b8300c;-webkit-text-stroke:0.45px #b8300c;white-space:nowrap">10</div>
<div style="left:741px;top:508.5px;width:22px;height:21.0px;border-radius:50%;background:#7de87a;filter:blur(0.6px)"></div>
<div style="left:741.5px;top:507px;font-family:'Liberation Serif',serif;font-size:20px;line-height:20px;color:#b8300c;-webkit-text-stroke:0.45px #b8300c;white-space:nowrap">11</div>
</body></html>
